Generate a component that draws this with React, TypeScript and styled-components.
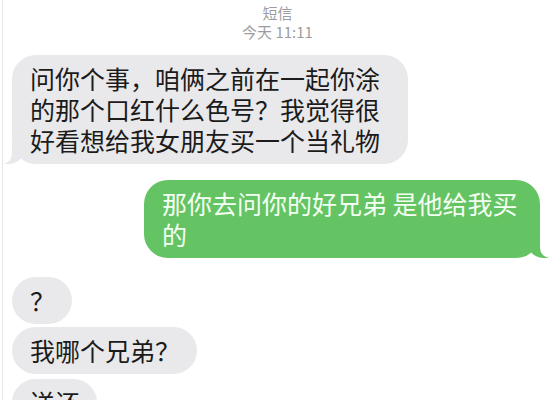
import React from "react"
import styled, { createGlobalStyle } from "styled-components"

const GlobalStyle = createGlobalStyle`
  html, body {
    margin: 0;
    padding: 0;
    background: #ffffff;
    overflow: hidden;
  }
  body {
    font-family: "Noto Sans CJK SC", "Noto Sans", sans-serif;
  }
`

const Screen = styled.div`
  width: 553px;
  height: 400px;
  box-sizing: border-box;
  margin-left: 2px;
  border-left: 1px solid #e6e6e6;
  padding: 3px 0 0 9px;
  overflow: hidden;
  display: flex;
  flex-direction: column;
`

const Header = styled.div`
  display: flex;
  flex-direction: column;
  align-items: center;
  color: #9d9d9f;
  font-size: 15px;
  line-height: 19px;
  padding-right: 12px;
`

const Thread = styled.div`
  display: flex;
  flex-direction: column;
  margin-top: 14px;
`

const Bubble = styled.div<{ $me?: boolean; $tail?: boolean; $gap?: number }>`
  position: relative;
  align-self: ${(p) => (p.$me ? "flex-end" : "flex-start")};
  margin-top: ${(p) => p.$gap ?? 0}px;
  margin-right: ${(p) => (p.$me ? "15px" : "0")};
  box-sizing: border-box;
  max-width: 396px;
  padding: 8px 17px 8px 18px;
  border-radius: 24px;
  font-size: 25px;
  line-height: 31px;
  background: ${(p) => (p.$me ? "#64c463" : "#e9e9eb")};
  color: ${(p) => (p.$me ? "#f4fff3" : "#1b1b1b")};

  ${(p) =>
    p.$tail &&
    (p.$me
      ? `
    &::before {
      content: "";
      position: absolute;
      bottom: 0;
      right: -8px;
      width: 20px;
      height: 22px;
      background: #64c463;
      border-bottom-left-radius: 16px 14px;
    }
    &::after {
      content: "";
      position: absolute;
      bottom: 0;
      right: -10px;
      width: 10px;
      height: 22px;
      background: #ffffff;
      border-bottom-left-radius: 10px;
    }
  `
      : `
    &::before {
      content: "";
      position: absolute;
      bottom: 0;
      left: -8px;
      width: 20px;
      height: 22px;
      background: #e9e9eb;
      border-bottom-right-radius: 16px 14px;
    }
    &::after {
      content: "";
      position: absolute;
      bottom: 0;
      left: -10px;
      width: 10px;
      height: 22px;
      background: #ffffff;
      border-bottom-right-radius: 10px;
    }
  `)}
`

const Text = styled.span`
  position: relative;
  z-index: 1;
`

export default function App() {
  return (
    <>
      <GlobalStyle />
      <Screen>
        <Header>
          <div>短信</div>
          <div>今天 11:11</div>
        </Header>
        <Thread>
          <Bubble $tail>
            <Text>问你个事，咱俩之前在一起你涂的那个口红什么色号？我觉得很好看想给我女朋友买一个当礼物</Text>
          </Bubble>
          <Bubble $me $tail $gap={16}>
            <Text>那你去问你的好兄弟 是他给我买的</Text>
          </Bubble>
          <Bubble $gap={19}>
            <Text>？</Text>
          </Bubble>
          <Bubble $gap={3}>
            <Text>我哪个兄弟？</Text>
          </Bubble>
          <Bubble $gap={5}>
            <Text>送还</Text>
          </Bubble>
        </Thread>
      </Screen>
    </>
  )
}
